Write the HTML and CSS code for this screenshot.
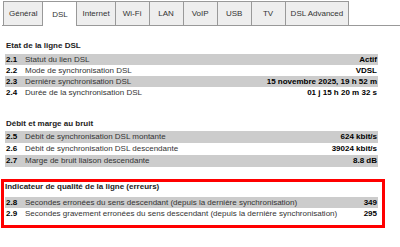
FILE: index.html
```html
<!DOCTYPE html>
<html>
<head>
    <title>DSL</title>
    <link rel="stylesheet" href="styles.css">
</head>
<body>
    <div class="tabs">
        <div class="tab">Général</div>
        <div class="tab active">DSL</div>
        <div class="tab">Internet</div>
        <div class="tab">Wi-Fi</div>
        <div class="tab">LAN</div>
        <div class="tab">VoIP</div>
        <div class="tab">USB</div>
        <div class="tab">TV</div>
        <div class="tab">DSL Advanced</div>
    </div>

    <div class="content">
        <div class="section">
            <h2 class="section-title">Etat de la ligne DSL</h2>
            <table class="info">
                <tr class="odd"><td class="num">2.1</td><td class="label">Statut du lien DSL</td><td class="value">Actif</td></tr>
                <tr><td class="num">2.2</td><td class="label">Mode de synchronisation DSL</td><td class="value">VDSL</td></tr>
                <tr class="odd"><td class="num">2.3</td><td class="label">Dernière synchronisation DSL</td><td class="value">15 novembre 2025, 19 h 52 m</td></tr>
                <tr><td class="num">2.4</td><td class="label">Durée de la synchronisation DSL</td><td class="value">01 j 15 h 20 m 32 s</td></tr>
            </table>
        </div>

        <div class="section rates">
            <h2 class="section-title">Débit et marge au bruit</h2>
            <table class="info">
                <tr class="odd"><td class="num">2.5</td><td class="label">Débit de synchronisation DSL montante</td><td class="value">624 kbit/s</td></tr>
                <tr><td class="num">2.6</td><td class="label">Débit de synchronisation DSL descendante</td><td class="value">39024 kbit/s</td></tr>
                <tr class="odd"><td class="num">2.7</td><td class="label">Marge de bruit liaison descendante</td><td class="value">8.8 dB</td></tr>
            </table>
        </div>

        <div class="section alert">
            <h2 class="section-title">Indicateur de qualité de la ligne (erreurs)</h2>
            <table class="info">
                <tr class="odd"><td class="num">2.8</td><td class="label">Secondes erronées du sens descendant (depuis la dernière synchronisation)</td><td class="value">349</td></tr>
                <tr><td class="num">2.9</td><td class="label">Secondes gravement erronées du sens descendant (depuis la dernière synchronisation)</td><td class="value">295</td></tr>
            </table>
        </div>
    </div>
</body>
</html>
```

FILE: styles.css
```css
body {
    margin: 0;
    font-family: "Liberation Sans", Arial, sans-serif;
    font-size: 8px;
    color: #222;
    background: #fff;
}

.tabs {
    display: flex;
    margin: 1px 0 0 2px;
    padding-left: 1px;
    border-bottom: 1px solid #999;
}

.tab {
    box-sizing: border-box;
    height: 24px;
    min-width: 35px;
    padding: 0 5px;
    margin-right: -1px;
    display: flex;
    align-items: center;
    justify-content: center;
    border: 1px solid #999;
    border-bottom: none;
    background: #eee;
    color: #333;
}

.tab.active {
    background: #fff;
    height: 25px;
    margin-bottom: -1px;
}

.content {
    padding: 0 15px 0 1px;
}

.section {
    padding: 0 7px 0 4px;
}

.section-title {
    font-size: 8px;
    font-weight: bold;
    line-height: 10px;
    margin: 15px 0 3px 1px;
}

.rates .section-title {
    margin-top: 21px;
    margin-bottom: 2px;
}

.info {
    width: 100%;
    border-collapse: collapse;
}

.info td {
    padding: 0;
    line-height: 11px;
    white-space: nowrap;
}

.rates .info td {
    line-height: 12px;
}

.info tr.odd td {
    background: #cccccc;
}

.info .num {
    width: 19px;
    padding-left: 1px;
    font-weight: bold;
    color: #000;
}

.info .label {
    color: #333;
}

.info .value {
    text-align: right;
    font-weight: bold;
    padding-right: 1px;
    color: #000;
}

.alert {
    border: 3px solid #ff0000;
    margin-top: 12px;
    padding: 0 4px 6px 1px;
}

.alert .section-title {
    margin: 0 0 5px 0;
}
```
